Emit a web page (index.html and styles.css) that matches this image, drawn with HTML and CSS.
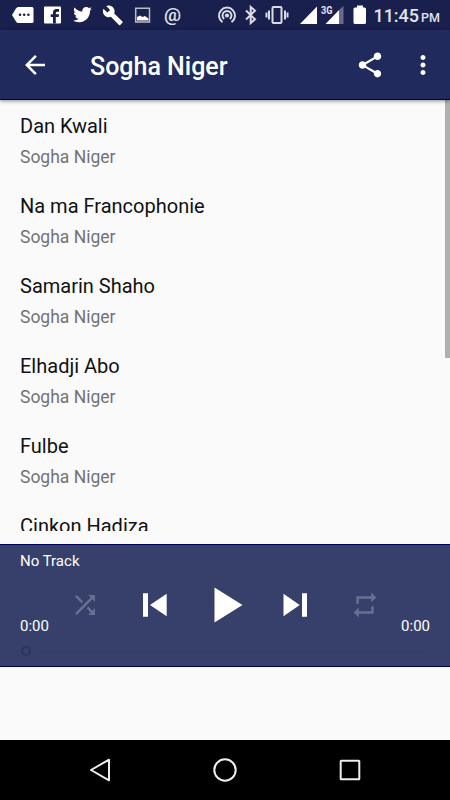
FILE: index.html
```html
<!DOCTYPE html>
<html lang="en">
<head>
    <meta charset="UTF-8">
    <meta name="viewport" content="width=device-width, initial-scale=1.0">
    <title>Sogha Niger</title>
    <link rel="stylesheet" href="styles.css">
</head>
<body>
    <div class="status-bar">
        <div class="notifications">
            <svg width="30" height="30" viewBox="0 0 30 30"><path fill="#fff" d="M10 7H24Q25.500 7 25.500 8.500V21.500Q25.500 23 24 23H10Q9 23 8 21.500L4 15L8 8.500Q9 7 10 7Z"/><g fill="#1a204d"><circle cx="12" cy="14.700" r="1.300"/><circle cx="16.200" cy="14.700" r="1.300"/><circle cx="20.400" cy="14.700" r="1.300"/></g></svg>
            <svg width="30" height="30" viewBox="0 0 30 30"><rect x="6" y="6.500" width="17" height="17" rx="1" fill="#fff"/><path fill="#1a204d" d="M15 23.500V17H12.700V14.300H15V12.500Q15 9 18.500 9H21V11.800H19.300Q17.800 11.800 17.800 13V14.300H21L20.600 17H17.800V23.500Z"/></svg>
            <svg width="30" height="30" viewBox="0 0 30 30"><path transform="translate(3.700 3.300) scale(.9)" fill="#fff" d="M22.460 6c-.77.350-1.600.580-2.460.690.880-.53 1.560-1.370 1.880-2.380-.83.500-1.750.850-2.720 1.050C18.370 4.500 17.260 4 16 4c-2.350 0-4.270 1.920-4.270 4.290 0 .340.040.670.110.980C8.280 9.090 5.110 7.380 3 4.790c-.37.630-.58 1.370-.58 2.150 0 1.490.750 2.810 1.910 3.560-.71 0-1.370-.2-1.950-.5v.03c0 2.080 1.480 3.820 3.440 4.210a4.220 4.220 0 0 1-1.930.070 4.280 4.280 0 0 0 4 2.980 8.521 8.521 0 0 1-5.330 1.840c-.34 0-.68-.02-1.020-.06C3.440 20.290 5.700 21 8.120 21 16 21 20.330 14.460 20.330 8.790c0-.19 0-.37-.01-.56.840-.6 1.560-1.360 2.140-2.230z"/></svg>
            <svg width="30" height="30" viewBox="0 0 30 30"><path transform="translate(4 4.500) scale(.9)" fill="#fff" d="M22.700 19l-9.100-9.100c.9-2.300.4-5-1.500-6.900-2-2-5-2.400-7.400-1.300L9 6 6 9 1.600 4.700C.4 7.100.9 10.100 2.900 12.100c1.900 1.900 4.600 2.400 6.900 1.500l9.100 9.100c.4.400 1 .4 1.400 0l2.300-2.300c.5-.4.500-1.100.1-1.400z"/></svg>
            <svg width="30" height="30" viewBox="0 0 30 30"><path fill="none" stroke="#b9bccc" stroke-width="1.500" d="M7.700 8.200H21.500V22H7.700Z"/><path fill="#fff" d="M9 20.500V17L12 15.500L14.500 17L17 16L20.500 18.500V20.500Z"/></svg>
            <span class="at-sign">@</span>
        </div>
        <svg class="system-icons" width="150" height="30" viewBox="217 0 150 30">
            <g fill="none" stroke="#d9dbe5" stroke-width="2">
                <path d="M222.500 22.200A8 8 0 1 1 231.500 22.200M224.200 18.900A4.500 4.500 0 1 1 229.800 18.900"/>
                <path d="M246 10.500L255 19.300L250.700 23V7L255 10.700L246 19.500"/>
                <rect x="272.500" y="7" width="9" height="16" rx="1"/>
                <path d="M269 10.500V19.500M266.500 12.500V17.500M285 10.500V19.500M287.500 12.500V17.500"/>
            </g>
            <circle cx="227" cy="15.500" r="2.100" fill="#d9dbe5"/>
            <path fill="#fff" d="M300 24L317 6.500V24ZM325.500 24L339 10V24Z"/>
            <path fill="#666b8d" d="M339 10L343.500 6V24H339Z"/>
            <path fill="#fff" d="M357 5.500H363V7.500H364.500Q366 7.500 366 9V22.500Q366 24 364.500 24H355Q353.500 24 353.500 22.500V9Q353.500 7.500 355 7.500H357Z"/>
            <text class="network" x="321" y="14" textLength="11.500" lengthAdjust="spacingAndGlyphs">3G</text>
        </svg>
        <div class="clock"><span>11:45</span><small>PM</small></div>
    </div>

    <header class="app-bar">
        <svg width="30" height="30" viewBox="0 0 24 24"><path d="M20 11H7.830l5.590-5.590L12 4l-8 8 8 8 1.410-1.410L7.830 13H20v-2z"/></svg>
        <h1>Sogha Niger</h1>
        <svg class="share" width="30" height="30" viewBox="0 0 24 24"><path d="M18 16.080c-.76 0-1.440.3-1.960.770L8.910 12.700c.050-.23.090-.46.090-.7s-.04-.47-.09-.7l7.050-4.110c.540.500 1.250.810 2.040.810 1.660 0 3-1.340 3-3s-1.340-3-3-3-3 1.340-3 3c0 .240.040.470.090.7L8.040 9.810C7.500 9.310 6.790 9 6 9c-1.660 0-3 1.340-3 3s1.340 3 3 3c.790 0 1.500-.31 2.040-.81l7.120 4.160c-.05.210-.08.430-.08.650 0 1.610 1.310 2.920 2.920 2.920s2.920-1.310 2.920-2.920-1.310-2.920-2.920-2.920z"/></svg>
        <svg class="more" width="30" height="30" viewBox="0 0 24 24"><path d="M12 8c1.100 0 2-.9 2-2s-.9-2-2-2-2 .9-2 2 .9 2 2 2zm0 2c-1.100 0-2 .9-2 2s.9 2 2 2 2-.9 2-2-.9-2-2-2zm0 6c-1.100 0-2 .9-2 2s.9 2 2 2 2-.9 2-2-.9-2-2-2z"/></svg>
    </header>

    <main class="content">
        <ul class="track-list">
            <li><h2>Dan Kwali</h2><p>Sogha Niger</p></li>
            <li><h2>Na ma Francophonie</h2><p>Sogha Niger</p></li>
            <li><h2>Samarin Shaho</h2><p>Sogha Niger</p></li>
            <li><h2>Elhadji Abo</h2><p>Sogha Niger</p></li>
            <li><h2>Fulbe</h2><p>Sogha Niger</p></li>
            <li><h2>Cinkon Hadiza</h2></li>
        </ul>
        <div class="scrollbar"></div>
    </main>

    <section class="player">
        <div class="now-playing">No Track</div>
        <div class="controls">
            <span class="time">0:00</span>
            <svg class="off" width="30" height="30" viewBox="0 0 24 24"><path d="M10.590 9.170L5.410 4 4 5.410l5.170 5.170 1.420-1.410zM14.500 4l2.040 2.040L4 18.590 5.410 20 17.960 7.460 20 9.500V4h-5.500zm.330 9.410l-1.410 1.410 3.130 3.130L14.500 20H20v-5.500l-2.040 2.040-3.130-3.130z"/></svg>
            <svg width="30" height="30" viewBox="0 0 30 30"><path d="M3 3.200H8V26.800H3ZM26.700 3.700V26.300L10 15Z"/></svg>
            <svg width="40" height="40" viewBox="0 0 40 40"><path d="M9.500 2.500V37.500L37.500 20Z"/></svg>
            <svg width="30" height="30" viewBox="0 0 30 30"><path d="M3.500 3.700V26.300L19.700 15ZM22 3.200H27V26.800H22Z"/></svg>
            <svg class="off" width="30" height="30" viewBox="0 0 24 24"><path d="M7 7h10v3l4-4-4-4v3H5v6h2V7zm10 10H7v-3l-4 4 4 4v-3h12v-6h-2v4z"/></svg>
            <span class="time end">0:00</span>
        </div>
        <div class="seek"><span class="thumb"></span><span class="seek-line"></span></div>
    </section>

    <nav class="nav-bar">
        <svg width="30" height="30" viewBox="0 0 30 30"><path d="M6 15L24 4.700V25.300Z"/></svg>
        <svg width="30" height="30" viewBox="0 0 30 30"><circle cx="15" cy="15" r="10.700"/></svg>
        <svg width="30" height="30" viewBox="0 0 30 30"><rect x="5.700" y="5.700" width="18.600" height="18.600" rx=".5"/></svg>
    </nav>
</body>
</html>
```

FILE: styles.css
```css
* {
    box-sizing: border-box;
}

body {
    font-family: Roboto, sans-serif;
    background-color: #fafafa;
    margin: 0;
    height: 800px;
    display: flex;
    flex-direction: column;
    overflow: hidden;
}

h1, h2, p, ul {
    margin: 0;
    padding: 0;
}

svg {
    display: block;
    flex: none;
}

/* Android status bar */
.status-bar {
    display: flex;
    flex: none;
    height: 30px;
    padding: 0 10px 0 8px;
    background-color: #1a204d;
    color: #e3e4eb;
}

.notifications {
    display: flex;
}

.at-sign {
    width: 30px;
    padding-right: 1px;
    font-size: 19px;
    font-weight: 500;
    line-height: 29px;
    text-align: center;
}

.system-icons {
    margin-left: 29px;
}

.network {
    font-size: 11px;
    font-weight: 700;
    fill: #e3e4eb;
}

.clock {
    display: flex;
    align-items: baseline;
    gap: 2px;
    margin-left: auto;
    font-size: 18px;
    font-weight: 500;
    line-height: 32px;
}

.clock small {
    font-size: 12.5px;
}

.app-bar {
    display: flex;
    flex: none;
    align-items: center;
    height: 70px;
    padding: 0 12.5px 0 20px;
    background-color: #202a5c;
    border-bottom: 1px solid #00004f;
    box-shadow: 0 1px 4px rgba(0, 0, 0, 0.45);
    color: white;
    fill: white;
    z-index: 1;
}

.app-bar h1 {
    margin-left: 40px;
    padding-top: 3px;
    font-size: 25px;
    font-weight: 500;
}

.share {
    margin-left: auto;
}

.more {
    margin-left: 22.5px;
}

/* Track list */
.content {
    display: flex;
    flex: none;
    justify-content: space-between;
    height: 431px;
    margin-bottom: 13px;
    overflow: hidden;
}

.track-list {
    list-style: none;
    padding-left: 20px;
}

.track-list li {
    height: 80px;
    padding-top: 13px;
}

.track-list h2 {
    color: #111;
    font-size: 20px;
    font-weight: 400;
    line-height: 26px;
}

.track-list p {
    margin-top: 6px;
    color: #737373;
    font-size: 17.5px;
    line-height: 24px;
}

.scrollbar {
    width: 5px;
    height: 258px;
    background-color: #b0b0b0;
}

/* Player */
.player {
    flex: none;
    height: 123px;
    background-color: #373f6b;
    border-top: 1px solid #00005a;
    border-bottom: 1px solid #00005a;
    color: white;
    fill: white;
}

.now-playing {
    height: 35px;
    padding: 6px 20px 0;
    font-size: 15px;
    line-height: 20px;
}

.controls {
    display: grid;
    grid-template-columns: 30px repeat(5, 70px) 30px;
    align-items: center;
    justify-items: center;
    height: 50px;
    padding: 0 20px;
}

.time {
    align-self: end;
    justify-self: start;
    margin-bottom: -6px;
    font-size: 15px;
    line-height: 20px;
}

.time.end {
    justify-self: end;
}

.off {
    opacity: 0.25;
}

.seek {
    display: flex;
    align-items: center;
    height: 24px;
    margin-top: 9px;
    padding: 0 21px;
}

.thumb {
    width: 10px;
    height: 10px;
    border: 2px solid #2c355f;
    border-radius: 50%;
}

.seek-line {
    flex: 1;
    height: 1px;
    margin: 3px 5px 0 3px;
    background-color: #353c68;
}

.nav-bar {
    display: flex;
    flex: none;
    align-items: center;
    justify-content: space-between;
    height: 60px;
    margin-top: auto;
    padding: 0 85px;
    background-color: black;
    fill: none;
    stroke: #eee;
    stroke-width: 2;
    stroke-linejoin: round;
}
```
